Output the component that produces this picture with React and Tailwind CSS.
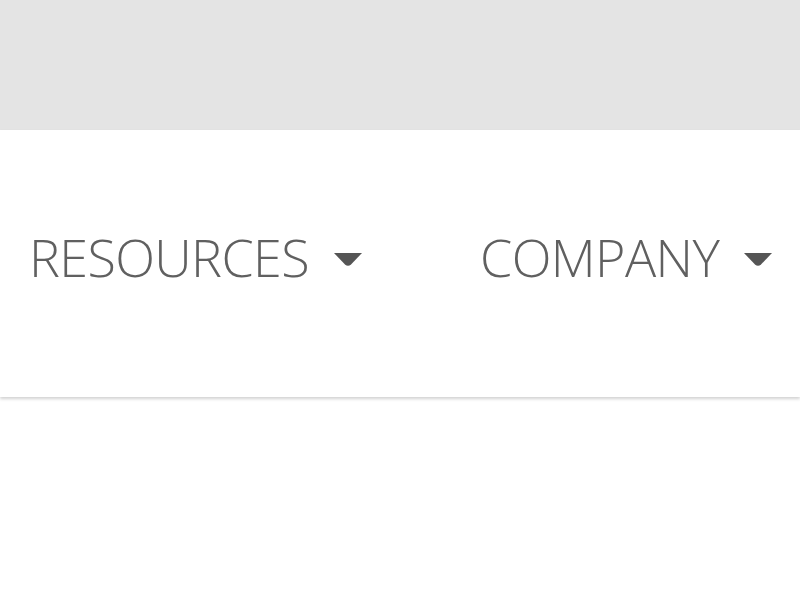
import React from "react";

const Caret = () => (
  <svg width="28" height="16" viewBox="0 0 28 16" className="ml-[25px] mt-[4px]">
    <path d="M0 2 H28 L17 13.5 Q14 16 11 13.5 Z" fill="#555" />
  </svg>
);

const App = () => {
  const items = ["RESOURCES", "COMPANY"];

  return (
    <div className="w-[800px] h-[600px] bg-white overflow-hidden" style={{ fontFamily: '"Open Sans", sans-serif' }}>
      {/* Top strip */}
      <div className="h-[130px] bg-[#e4e4e4]" />

      {/* Nav */}
      <div className="h-[267px] bg-white flex items-center shadow-[0_2px_3px_rgba(0,0,0,0.18)] pl-[29px] pb-[14px]">
        <div className="flex items-center gap-[118px]">
          {items.map((item) => (
            <div key={item} className="flex items-center">
              <span className="text-[52px] font-light text-[#606060] tracking-[-0.6px] leading-none">
                {item}
              </span>
              <Caret />
            </div>
          ))}
        </div>
      </div>
    </div>
  );
};

export default App;
